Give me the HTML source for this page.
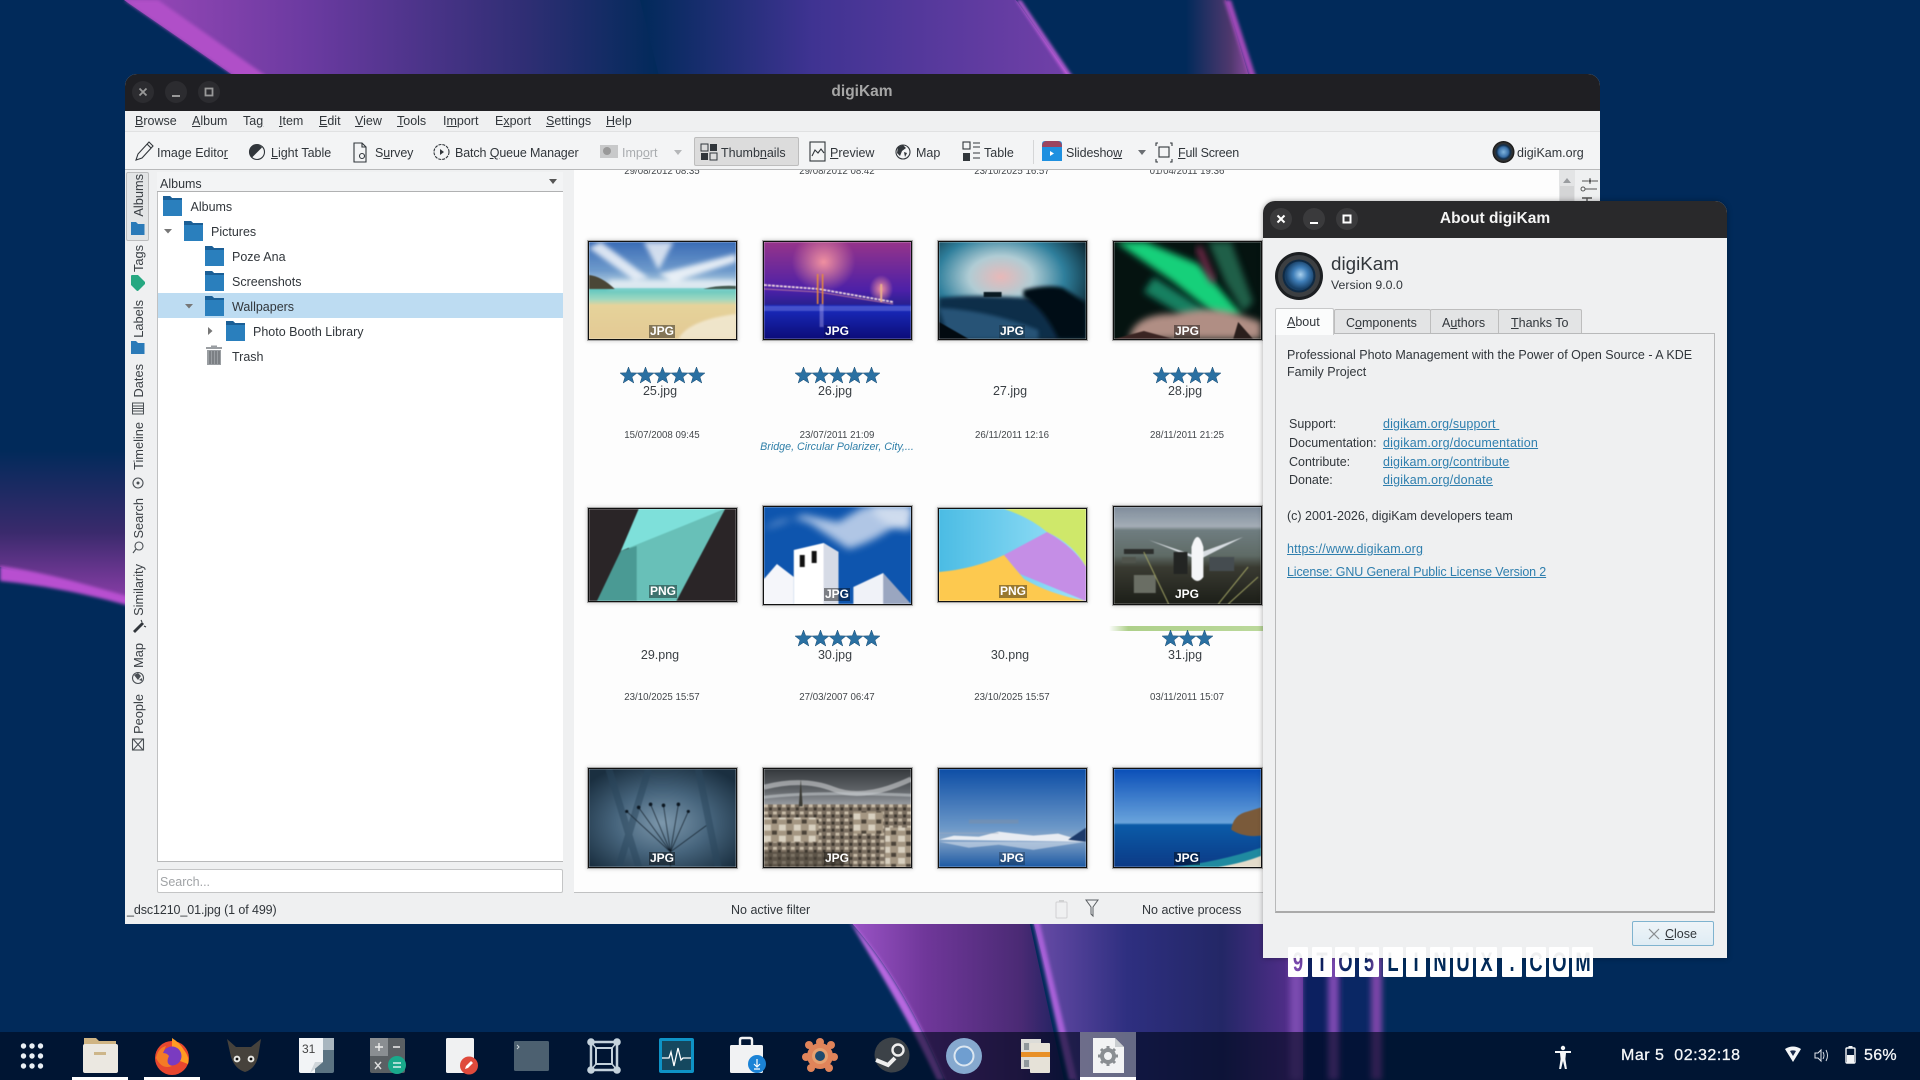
<!DOCTYPE html>
<html><head><meta charset="utf-8"><title>digiKam</title>
<style>
html,body{margin:0;padding:0;width:1920px;height:1080px;overflow:hidden;background:#012a5a}
body{position:relative;font-family:"Liberation Sans",sans-serif;font-size:12.5px;color:#31363b}
.a,.t,svg.a{position:absolute}
.t{white-space:nowrap;line-height:16px}
.v{writing-mode:vertical-rl;transform:rotate(180deg);left:131px;width:16px;line-height:16px;white-space:nowrap;position:absolute;font-size:12.8px;text-align:center;color:#3a3f44}
.th{position:absolute;box-shadow:0 0 0 1px #111,0 0 0 2px #aaa,0 0 4px 2px #ccc;overflow:hidden}
.th svg{position:absolute;left:0;top:0;width:100%;height:100%;filter:blur(.5px)}
.lb{position:absolute;font-weight:bold;font-size:12px;line-height:13px;color:#fff;background:rgba(0,0,0,.42);padding:0 1px}
.n{position:absolute;width:120px;text-align:center;line-height:16px;font-size:12.5px;color:#3a3f44}
.d{position:absolute;width:120px;text-align:center;line-height:14px;font-size:9.7px;color:#44484c}
a{color:#2f7fae;text-decoration:underline}
.tab{position:absolute;top:309px;height:24px;background:#e3e4e5;border:1px solid #bdbdbd;border-bottom:none;box-sizing:border-box;border-radius:2px 2px 0 0}
.wm{position:absolute;top:947px;height:30px;background:#fff;color:#000;mix-blend-mode:screen;text-align:center;overflow:hidden;border-radius:1px}
.wm span{display:block;font-weight:bold;font-size:27px;line-height:30px;transform:scaleX(.68)}
</style></head><body>

<!-- wallpaper -->
<svg class="a" style="left:0;top:0" width="1920" height="1080" viewBox="0 0 1920 1080">
<defs>
<filter id="sb" x="-20%" y="-5%" width="140%" height="110%"><feGaussianBlur stdDeviation="1.6"/></filter>
<filter id="sb2" x="-50%" y="-5%" width="200%" height="110%"><feGaussianBlur stdDeviation="3"/></filter>
<linearGradient id="w1" x1="0" x2="1" y1="0" y2="0"><stop offset="0" stop-color="#9a48b8"/><stop offset=".35" stop-color="#6a3aa0"/><stop offset=".75" stop-color="#2f2e74"/><stop offset="1" stop-color="#012a5a"/></linearGradient>
<linearGradient id="w2" x1="0" x2="1" y1="0" y2="0"><stop offset="0" stop-color="#012a5a"/><stop offset=".4" stop-color="#3f3392"/><stop offset="1" stop-color="#7240a8"/></linearGradient>
<linearGradient id="w3" x1="0" x2="0" y1="0" y2="1"><stop offset="0" stop-color="#012a5a"/><stop offset=".55" stop-color="#3a2a6c"/><stop offset="1" stop-color="#8a3ea8"/></linearGradient>
<linearGradient id="w4" x1="0" x2="1" y1="0" y2="0"><stop offset="0" stop-color="#9c55c8"/><stop offset=".35" stop-color="#70379a"/><stop offset=".8" stop-color="#4a2a74"/><stop offset="1" stop-color="#1c2260"/></linearGradient>
<linearGradient id="w5" x1="0" x2="1" y1="0" y2="0"><stop offset="0" stop-color="#6a4ca8"/><stop offset=".35" stop-color="#2e2f80"/><stop offset=".7" stop-color="#232766"/><stop offset="1" stop-color="#5a2f90"/></linearGradient>
<linearGradient id="w6" x1="0" x2="1" y1="0" y2="0"><stop offset="0" stop-color="#012a5a"/><stop offset=".7" stop-color="#50386e"/><stop offset="1" stop-color="#8a4aa0"/></linearGradient>
<linearGradient id="w7" x1="0" x2="1" y1="0" y2="0"><stop offset="0" stop-color="#5a2f90"/><stop offset=".5" stop-color="#7a4ab0"/><stop offset="1" stop-color="#1a2a66"/></linearGradient>
</defs>
<rect width="1920" height="1080" fill="#012a5a"/>
<!-- top -->
<polygon points="124,0 660,0 660,80 240,80" fill="url(#w1)"/>
<polygon points="124,0 158,0 272,80 240,80" fill="#b04fc8" filter="url(#sb)"/>
<polygon points="640,0 1016,0 1072,80 660,80" fill="url(#w2)"/>
<polygon points="1016,0 1021,0 1075,80 1069,80" fill="#c860e0" filter="url(#sb)" opacity=".9"/>
<polygon points="1186,0 1226,0 1250,80 1186,80" fill="url(#w6)"/>
<polygon points="1224,0 1231,0 1257,80 1250,80" fill="#a04ab8" filter="url(#sb)"/>
<!-- left -->
<polygon points="0,450 130,450 130,600 0,567" fill="url(#w3)"/>
<path d="M0,566 C50,573 90,586 130,597 L130,606 C90,595 50,586 0,581Z" fill="#b850d0" filter="url(#sb)"/>
<!-- bottom -->
<path d="M849,920 L1029,920 L1064,1080 L945,1080 C915,1010 885,960 849,920Z" fill="url(#w4)"/>
<path d="M849,920 C885,960 915,1010 945,1080 L937,1080 C907,1015 875,965 849,920Z" fill="#b868e0" filter="url(#sb)"/>
<path d="M1033,920 L1303,920 L1303,1080 L1075,1080Z" fill="url(#w5)"/>
<path d="M1033,920 L1039,920 L1077,1080 L1069,1080Z" fill="#a860d8" filter="url(#sb)"/>
<rect x="1303" y="950" width="40" height="130" fill="#0c2060"/>
<rect x="1342" y="950" width="30" height="130" fill="#0a2764" />
<rect x="1290" y="950" width="12" height="130" fill="#7a4cb0" filter="url(#sb2)"/>
<rect x="1328" y="950" width="11" height="130" fill="#7c4ab0" filter="url(#sb2)"/>
<rect x="1371" y="950" width="11" height="130" fill="#7c44a8" filter="url(#sb2)"/>
</svg>

<!-- main window -->
<div class="a" style="left:125px;top:74px;width:1475px;height:850px;background:#eff0f1;border-radius:12px 12px 0 0;overflow:hidden">
<div class="a" style="left:0;top:0;width:1475px;height:37px;background:#1f1f23"></div>
</div>
<div class="t" style="left:800px;width:124px;text-align:center;top:84px;font-weight:bold;font-size:15.5px;color:#a6a6a6">digiKam</div>
<svg class="a" style="left:125px;top:74px" width="100" height="37">
<circle cx="18" cy="18" r="11" fill="#2c2c30"/><circle cx="51" cy="18" r="11" fill="#2c2c30"/><circle cx="84" cy="18" r="11" fill="#2c2c30"/>
<path d="M14.5,14.5l7,7m0,-7l-7,7" stroke="#999" stroke-width="1.8"/><rect x="47" y="21" width="8" height="2" fill="#999"/><rect x="80.5" y="14.5" width="7" height="7" fill="none" stroke="#999" stroke-width="1.8"/>
</svg>

<!-- menu -->
<div class="t" style="left:135px;top:113px"><u>B</u>rowse</div>
<div class="t" style="left:192px;top:113px"><u>A</u>lbum</div>
<div class="t" style="left:243px;top:113px">Ta<u>g</u></div>
<div class="t" style="left:279px;top:113px"><u>I</u>tem</div>
<div class="t" style="left:319px;top:113px"><u>E</u>dit</div>
<div class="t" style="left:355px;top:113px"><u>V</u>iew</div>
<div class="t" style="left:397px;top:113px"><u>T</u>ools</div>
<div class="t" style="left:443px;top:113px">I<u>m</u>port</div>
<div class="t" style="left:495px;top:113px">E<u>x</u>port</div>
<div class="t" style="left:546px;top:113px"><u>S</u>ettings</div>
<div class="t" style="left:606px;top:113px"><u>H</u>elp</div>
<div class="a" style="left:125px;top:131px;width:1475px;height:1px;background:#e0e1e2"></div>

<!-- toolbar -->
<div class="a" style="left:125px;top:132px;width:1475px;height:37px;background:#f3f4f5"></div>
<div class="a" style="left:125px;top:169px;width:1475px;height:1px;background:#b8b9ba"></div>
<div class="a" style="left:694px;top:137px;width:105px;height:29px;background:#dcdcdc;border:1px solid #bdbdbd;box-sizing:border-box;border-radius:2px"></div>
<div class="t" style="left:157px;top:145px">Image Edito<u>r</u></div>
<div class="t" style="left:271px;top:145px"><u>L</u>ight Table</div>
<div class="t" style="left:375px;top:145px;letter-spacing:-.1px">S<u>u</u>rvey</div>
<div class="t" style="left:455px;top:145px;letter-spacing:-.12px">Batch <u>Q</u>ueue Manager</div>
<div class="t" style="left:622px;top:145px;color:#a9acaf">Imp<u>o</u>rt</div>
<div class="t" style="left:721px;top:145px">Thumb<u>n</u>ails</div>
<div class="t" style="left:830px;top:145px"><u>P</u>review</div>
<div class="t" style="left:916px;top:145px">Map</div>
<div class="t" style="left:984px;top:145px">Table</div>
<div class="t" style="left:1066px;top:145px;letter-spacing:-.1px">Slidesho<u>w</u></div>
<div class="t" style="left:1178px;top:145px;letter-spacing:-.2px"><u>F</u>ull Screen</div>
<div class="t" style="left:1517px;top:145px">digiKam.org</div>
<svg class="a" style="left:0;top:0" width="1600" height="440" viewBox="0 0 1600 440">
<defs>
<radialGradient id="lens"><stop offset="0" stop-color="#7fb4dc"/><stop offset=".45" stop-color="#3a70a8"/><stop offset=".62" stop-color="#12304e"/><stop offset=".8" stop-color="#333"/><stop offset="1" stop-color="#111"/></radialGradient>
</defs>
<g fill="none" stroke="#31363b" stroke-width="1.1">
<path d="M136,160 l2,-6 l11,-12 l4,4 l-11,12z M147,144 l4,4"/>
<circle cx="257" cy="152" r="7.5"/>
<path d="M354,143h8l4,4v15h-12z M362,143v4h4"/><circle cx="362" cy="156" r="2.5"/>
<circle cx="441.5" cy="152" r="7.5" stroke-dasharray="3 1"/>
<rect x="810" y="142" width="15" height="19"/><path d="M812,156l3,-6l3,3l3,-4l3,4"/>
<circle cx="903" cy="152" r="7"/>
<rect x="963" y="142" width="7" height="7"/>
<path d="M973,143h7m-7,4h7m-7,6h7m-7,5h7"/>
<path d="M1158,143h-2v3m14,-3h2v3m-16,13v3h2m14,-3v3h-2"/><rect x="1159" y="147" width="10" height="10"/>
</g>
<path d="M257,144.5a7.500,7.500 0 0 0 -5,13l10,-10a7.500,7.500 0 0 0 -5,-3z" fill="#31363b"/>
<path d="M440,149l4,3l-4,3z" fill="#31363b"/>
<path d="M898,147l5,-2l3,3l-4,3l-2,5l-3,-3zM904,152l3,1l-2,4z" fill="#31363b"/>
<rect x="963" y="153" width="7" height="8" fill="#31363b"/>
<!-- import -->
<rect x="600" y="145" width="18" height="13" fill="#c8c9ca"/><circle cx="607" cy="151" r="4" fill="#999"/>
<path d="M674,150h8l-4,5z" fill="#b5b7b9"/>
<!-- thumbs icon -->
<rect x="701" y="144" width="7" height="7" fill="none" stroke="#31363b"/><rect x="710" y="144" width="7" height="7" fill="#31363b"/><rect x="701" y="153" width="7" height="7" fill="#31363b"/><rect x="710" y="153" width="7" height="7" fill="none" stroke="#31363b"/>
<!-- slideshow -->
<path d="M1042,144q0,-3 3,-3h14q3,0 3,3v17h-20z" fill="#1e90e0"/><path d="M1042,147q0,-6 5,-6h10q5,0 5,6z" fill="#9b4560"/><path d="M1050,151l4,2.500l-4,2.500z" fill="#fff"/>
<path d="M1138,150h8l-4,5z" fill="#6a6e72"/>
<rect x="1033" y="140" width="1" height="24" fill="#d5d6d7"/>
<circle cx="1503.500" cy="152" r="11" fill="url(#lens)"/>
<!-- sidebar icons -->
<path d="M131,276q0,-1 1,-1h6l7,7v2l-6.500,6.500q-1,1 -2,0l-5.500,-5.500z" fill="#26a881"/>
<path d="M131,341h5l2,2h6.500v11h-13.500z" fill="#2a7ab8"/>
<g fill="none" stroke="#4a4f54" stroke-width="1"><rect x="132.500" y="403" width="11" height="11"/><path d="M133,406h10M133,408.500h10M133,411h10"/></g>
</svg>

<!-- sidebar -->
<div class="a" style="left:126px;top:172px;width:23px;height:69px;background:#e3e5e6;border:1px solid #bcbdbe;box-sizing:border-box;border-radius:2px"></div>
<svg class="a" style="left:0;top:0" width="160" height="260"><path d="M131,222h5l2,2h6.500v11h-13.500z" fill="#2a7ab8"/></svg>
<div class="v" style="top:174px">Albums</div>
<div class="v" style="top:245px">Tags</div>
<div class="v" style="top:300px">Labels</div>
<div class="v" style="top:364px">Dates</div>
<div class="v" style="top:422px">Timeline</div>
<div class="v" style="top:498px">Search</div>
<div class="v" style="top:564px">Similarity</div>
<div class="v" style="top:643px">Map</div>
<div class="v" style="top:694px">People</div>
<svg class="a" style="left:0;top:0" width="160" height="770" viewBox="0 0 160 770">
<g fill="none" stroke="#4a4f54" stroke-width="1.1">
<circle cx="138" cy="483" r="5"/><circle cx="139" cy="546" r="4"/><path d="M136,549l-3,4"/>
<circle cx="138" cy="678" r="5.500"/><rect x="132.500" y="739" width="11" height="11"/><path d="M133,739l10,11M143,739l-10,11"/>
</g>
<path d="M133,631l9,-9l2,2l-9,9z" fill="#31363b"/><path d="M141,620l1,2M144,626l2,1" stroke="#31363b"/>
<path d="M134,675l4,-2l3,3l-3,4zM139,680l3,-2l0,3z" fill="#4a4f54"/><circle cx="138" cy="483" r="1.500" fill="#4a4f54"/>
</svg>

<!-- left panel -->
<div class="a" style="left:157px;top:172px;width:406px;height:20px;background:#f3f4f5;border-bottom:1px solid #b0b1b2;box-sizing:border-box"></div>
<div class="t" style="left:160px;top:176px">Albums</div>
<svg class="a" style="left:548px;top:178px" width="10" height="8"><path d="M1,1h8l-4,5z" fill="#555"/></svg>
<div class="a" style="left:157px;top:192px;width:406px;height:670px;background:#fff;border-left:1px solid #c0c1c2;border-bottom:1px solid #b8b9ba;box-sizing:border-box"></div>
<div class="a" style="left:158px;top:293px;width:405px;height:25px;background:#bddcf2"></div>
<svg class="a" style="left:0;top:0" width="600" height="380" viewBox="0 0 600 380">
<defs><g id="f"><path d="M0,0h7l2,2h10v18h-19z" fill="#2a7fbd"/><path d="M0,0h7l2,2h10v2h-19z" fill="#1b5f96"/></g></defs>
<use href="#f" x="163" y="196"/><use href="#f" x="184" y="221"/><use href="#f" x="205" y="246"/><use href="#f" x="205" y="271"/><use href="#f" x="205" y="296"/><use href="#f" x="226" y="321"/>
<path d="M164,229h8l-4,4.500z M185,304h8l-4,4.500z" fill="#777"/><path d="M208,327v8l4.500,-4z" fill="#777"/>
<g fill="#9a9ea2"><rect x="206" y="347" width="16" height="2"/><rect x="211" y="345.500" width="6" height="2"/><rect x="207" y="350" width="14" height="15"/></g>
<g stroke="#5e6266" stroke-width="1"><path d="M210,351v13M213,351v13M216,351v13M219,351v13"/></g>
</svg>
<div class="t" style="left:190.500px;top:199px">Albums</div>
<div class="t" style="left:211px;top:224px">Pictures</div>
<div class="t" style="left:232px;top:249px">Poze Ana</div>
<div class="t" style="left:232px;top:274px">Screenshots</div>
<div class="t" style="left:232px;top:299px">Wallpapers</div>
<div class="t" style="left:253px;top:324px">Photo Booth Library</div>
<div class="t" style="left:232px;top:349px">Trash</div>
<div class="a" style="left:157px;top:869px;width:406px;height:24px;background:#fff;border:1px solid #c4c5c6;box-sizing:border-box;border-radius:2px"></div>
<div class="t" style="left:160px;top:874px;color:#a0a3a6">Search...</div>
<div class="t" style="left:127px;top:902px;letter-spacing:-.1px">_dsc1210_01.jpg (1 of 499)</div>

<!-- view background -->
<div class="a" style="left:574px;top:170px;width:985px;height:722px;background:#fdfdfd"></div>
<div class="a" style="left:574px;top:892px;width:1026px;height:1px;background:#c0c1c2"></div>
<div class="t" style="left:731px;top:902px">No active filter</div>
<div class="t" style="left:1142px;top:902px">No active process</div>
<svg class="a" style="left:1050px;top:897px" width="60" height="24"><rect x="6" y="5" width="11" height="16" rx="1" fill="none" stroke="#d0d1d2"/><rect x="9" y="3" width="5" height="2" fill="#d0d1d2"/><path d="M36,3h12l-5,7v9l-2,-2v-7z" fill="none" stroke="#5a5e62"/></svg>

<!-- scrollbar + rail -->
<div class="a" style="left:1559px;top:170px;width:16px;height:40px;background:#e3e4e5"></div>
<svg class="a" style="left:1559px;top:170px" width="41" height="32"><path d="M4,13h8l-4,-5z" fill="#9a9da0"/><rect x="1" y="16" width="14" height="16" fill="#d4d5d6"/>
<path d="M23,11h6M33,11h6M31,8v6M26,19h12" stroke="#555" fill="none"/><circle cx="31" cy="11" r="1.500" fill="#555"/><circle cx="24" cy="19" r="2" fill="#f3f4f5" stroke="#555"/><path d="M23,28h10M28,28v6" stroke="#555" stroke-width="1.400"/></svg>

<!-- thumbnails (clipped) -->
<div class="a" style="left:0;top:0;width:1920px;height:1080px;clip-path:inset(170px 657px 188px 574px)">
<div class="d" style="left:602px;top:165px">29/08/2012 08:35</div>
<div class="d" style="left:777px;top:165px">29/08/2012 08:42</div>
<div class="d" style="left:952px;top:165px">23/10/2025 16:57</div>
<div class="d" style="left:1127px;top:165px">01/04/2011 19:36</div>

<!-- 25 -->
<div class="th" style="left:589px;top:242px;width:147px;height:97px"><svg viewBox="0 0 148 97" preserveAspectRatio="none">
<defs><linearGradient id="a1" x2="0" y2="1"><stop offset="0" stop-color="#3a6cb6"/><stop offset=".6" stop-color="#6f9bcc"/><stop offset="1" stop-color="#cfe3e8"/></linearGradient><linearGradient id="a2" x2="0" y2="1"><stop offset="0" stop-color="#58c4c0"/><stop offset=".22" stop-color="#9fd8c0"/><stop offset=".34" stop-color="#e6d39a"/><stop offset="1" stop-color="#e3c995"/></linearGradient><filter id="b1" x="-30%" y="-30%" width="160%" height="160%"><feGaussianBlur stdDeviation="2.500"/></filter><filter id="b2"><feGaussianBlur stdDeviation="1"/></filter></defs>
<rect width="148" height="48" fill="url(#a1)"/><rect y="46" width="148" height="51" fill="url(#a2)"/>
<g filter="url(#b1)" fill="#f2f6fa"><path d="M0,6L45,38L60,36L12,0z" opacity=".85"/><path d="M70,32L148,12V20L85,40z" opacity=".9"/><path d="M55,0h30l-15,28z" opacity=".8"/><path d="M20,38H148V46H20z" opacity=".7"/></g>
<path d="M0,33 Q12,34 26,47H0z" fill="#4a4636"/><path d="M115,47q15,-4 33,-3v3z" fill="#445a50"/>
<path d="M90,97Q100,78 148,72V97z" fill="#f5f0e0" filter="url(#b2)" opacity=".7"/>
</svg></div><div class="lb" style="left:649px;top:325px">JPG</div>
<!-- 26 -->
<div class="th" style="left:764px;top:242px;width:147px;height:97px"><svg viewBox="0 0 148 97" preserveAspectRatio="none">
<defs><linearGradient id="c1" x2="0" y2="1"><stop offset="0" stop-color="#96348a"/><stop offset=".5" stop-color="#4c20a8"/><stop offset=".64" stop-color="#2a2090"/><stop offset=".66" stop-color="#1a2cc0"/><stop offset="1" stop-color="#0c0c78"/></linearGradient><radialGradient id="c2"><stop offset="0" stop-color="#f090a0"/><stop offset="1" stop-color="#f090a0" stop-opacity="0"/></radialGradient></defs>
<rect width="148" height="97" fill="url(#c1)"/><ellipse cx="60" cy="20" rx="32" ry="30" fill="url(#c2)"/><ellipse cx="118" cy="47" rx="12" ry="14" fill="url(#c2)"/>
<path d="M0,43L55,47L130,60" stroke="#f0d8e0" stroke-width="1.800" fill="none" stroke-dasharray="3 1"/><path d="M0,47L55,50L130,62" stroke="#b070a0" stroke-width="1" fill="none"/><path d="M54,32V62M59,32V62" stroke="#e88a3a" stroke-width="1.500"/><path d="M118,42V60" stroke="#e8b08a" stroke-width="2"/>
<path d="M0,64H148V69H0z" fill="#7a80e0" opacity=".45"/><path d="M58,62V85" stroke="#d0c8ff" stroke-width="4" opacity=".35"/>
</svg></div><div class="lb" style="left:824px;top:325px;background:rgba(0,0,0,.15)">JPG</div>
<!-- 27 -->
<div class="th" style="left:939px;top:242px;width:147px;height:97px"><svg viewBox="0 0 148 97" preserveAspectRatio="none">
<defs><radialGradient id="d1" cx=".42" cy=".36" r=".72"><stop offset="0" stop-color="#e8b8b8"/><stop offset=".3" stop-color="#b0ccd4"/><stop offset=".6" stop-color="#2f7f9c"/><stop offset="1" stop-color="#04141c"/></radialGradient><filter id="d2" x="-10%" y="-20%" width="120%" height="140%"><feGaussianBlur stdDeviation="1.800"/></filter></defs>
<rect width="148" height="97" fill="url(#d1)"/><path d="M0,56Q50,50 148,62V97H0z" fill="#0f2e48" filter="url(#d2)"/><path d="M85,48q25,-6 40,-2l23,15V97H120Q105,65 85,55z" fill="#050c14" filter="url(#d2)"/><rect x="45" y="50" width="18" height="5" fill="#0a1a22"/><path d="M0,66Q50,68 100,88V97H10z" fill="#30648a" opacity=".7" filter="url(#d2)"/><path d="M0,80L30,97H0z" fill="#020a10"/>
</svg></div><div class="lb" style="left:999px;top:325px;background:rgba(0,0,0,.2)">JPG</div>
<!-- 28 -->
<div class="th" style="left:1114px;top:242px;width:147px;height:97px"><svg viewBox="0 0 148 97" preserveAspectRatio="none">
<defs><filter id="e1" x="-30%" y="-30%" width="160%" height="160%"><feGaussianBlur stdDeviation="3.500"/></filter></defs>
<rect width="148" height="97" fill="#051310"/><path d="M2,0H32L85,22L128,72L108,78L60,40z" fill="#18d07a" filter="url(#e1)"/><path d="M40,35L108,78L80,80L30,50z" fill="#128060" filter="url(#e1)"/><path d="M95,0L112,40L130,70L140,60L118,0z" fill="#2a8060" filter="url(#e1)" opacity=".7"/><path d="M85,5L100,40" stroke="#a03060" stroke-width="6" filter="url(#e1)" opacity=".8"/>
<path d="M15,97Q20,72 60,72Q100,62 130,74L148,80V97z" fill="#b08e84" filter="url(#e1)"/><path d="M0,97h60l-30,-8z" fill="#3a2422"/><path d="M125,80l15,17h-20z" fill="#2a1e1c"/>
</svg></div><div class="lb" style="left:1174px;top:325px">JPG</div>

<!-- 29 -->
<div class="th" style="left:589px;top:509px;width:147px;height:92px"><svg viewBox="0 0 148 92" preserveAspectRatio="none">
<rect width="148" height="92" fill="#2a2527"/><polygon points="40,38 137,0 88,92 48,92" fill="#68c0b8"/><polygon points="32,42 48,37 48,92 8,92" fill="#4a9a94"/><polygon points="50,0 137,0 32,42" fill="#7ee0da"/>
</svg></div><div class="lb" style="left:649px;top:585px;background:rgba(0,0,0,.4)">PNG</div>
<!-- 30 -->
<div class="th" style="left:764px;top:507px;width:147px;height:97px"><svg viewBox="0 0 148 97" preserveAspectRatio="none">
<defs><filter id="g1" x="-30%" y="-30%" width="160%" height="160%"><feGaussianBlur stdDeviation="4"/></filter></defs>
<rect width="148" height="97" fill="#0e55ae"/><path d="M0,22Q30,2 55,22L85,42Q120,32 148,5V0H100L75,15L40,8z" fill="#e6ecf8" filter="url(#g1)" opacity=".75"/><path d="M105,0H148V22Q125,25 105,0z" fill="#cfdcee" filter="url(#g1)"/>
<polygon points="30,43 60,36 75,45 75,97 30,97" fill="#fff"/><polygon points="60,36 75,45 75,97 60,97" fill="#d6dbe6"/><polygon points="0,72 13,57 30,70 30,97 0,97" fill="#f5f6fa"/><polygon points="90,80 120,66 135,90 135,97 90,97" fill="#f0f2f8"/><polygon points="120,66 148,97 120,97" fill="#9aa6c0"/><rect x="36" y="48" width="5" height="12" fill="#111"/><rect x="48" y="44" width="5" height="12" fill="#111"/>
</svg></div><div class="lb" style="left:824px;top:588px">JPG</div>
<!-- 30 png -->
<div class="th" style="left:939px;top:509px;width:147px;height:92px"><svg viewBox="0 0 147 92" preserveAspectRatio="none">
<defs><linearGradient id="h1" x2="1" y2="0"><stop offset="0" stop-color="#4bbce4"/><stop offset="1" stop-color="#9fe4fa"/></linearGradient></defs>
<rect width="147" height="92" fill="url(#h1)"/><path d="M65,0H147V58Q135,35 108,23Q90,8 65,0z" fill="#cfe86a"/><path d="M108,23L65,46Q75,58 81,65L147,92V58Q135,38 108,23z" fill="#c58ee6"/><path d="M0,63Q35,60 65,46Q78,62 85,70Q110,85 147,92H0z" fill="#fdc94f"/>
</svg></div><div class="lb" style="left:999px;top:585px;background:rgba(0,0,0,.4)">PNG</div>
<!-- 31 -->
<div class="th" style="left:1114px;top:507px;width:147px;height:97px"><svg viewBox="0 0 148 97" preserveAspectRatio="none">
<defs><linearGradient id="i1" x2="0" y2="1"><stop offset="0" stop-color="#7f8d9c"/><stop offset=".2" stop-color="#a4adb6"/><stop offset=".24" stop-color="#6f7d80"/><stop offset=".5" stop-color="#5f6b66"/><stop offset=".62" stop-color="#3a3b32"/><stop offset="1" stop-color="#1c1e18"/></linearGradient></defs>
<rect width="148" height="97" fill="url(#i1)"/><path d="M35,33L80,48L130,30L85,53z" fill="#d8dde2"/><path d="M78,40Q84,20 90,40L90,70Q84,78 78,70z" fill="#f5f6f8"/>
<rect x="10" y="42" width="30" height="5" fill="#2c2e2c"/><rect x="20" y="68" width="22" height="18" fill="#6a6e64"/><rect x="8" y="50" width="14" height="6" fill="#50544c"/><path d="M30,45L55,97M105,97L135,60M115,97L145,70" stroke="#9a9c60" stroke-width="1"/><rect x="60" y="45" width="14" height="22" fill="#232523"/><rect x="96" y="50" width="25" height="14" fill="#454c50"/>
</svg></div><div class="lb" style="left:1174px;top:588px;background:none">JPG</div>

<!-- 32 -->
<div class="th" style="left:589px;top:769px;width:147px;height:98px"><svg viewBox="0 0 148 97" preserveAspectRatio="none">
<defs><radialGradient id="j1" cx=".5" cy=".55" r=".65"><stop offset="0" stop-color="#7d98ac"/><stop offset=".5" stop-color="#46647c"/><stop offset="1" stop-color="#1a2f40"/></radialGradient></defs>
<rect width="148" height="97" fill="url(#j1)"/><path d="M20,0L50,97M60,0L30,97M110,0L130,97" stroke="#2a465c" stroke-width="7" opacity=".5"/><g stroke="#0b1620" stroke-width=".6" fill="none"><path d="M82,82L38,42M82,82L50,38M82,82L62,35M82,82L75,36M82,82L90,35M82,82L100,42M82,82L118,56M82,82V97"/></g><g fill="#0b1620"><circle cx="38" cy="42" r="1.600"/><circle cx="50" cy="38" r="1.800"/><circle cx="62" cy="35" r="1.800"/><circle cx="75" cy="36" r="1.800"/><circle cx="90" cy="35" r="1.800"/><circle cx="100" cy="42" r="1.600"/></g>
</svg></div><div class="lb" style="left:649px;top:852px">JPG</div>
<!-- 33 -->
<div class="th" style="left:764px;top:769px;width:147px;height:98px"><svg viewBox="0 0 148 97" preserveAspectRatio="none">
<defs><pattern id="k1" width="9" height="7" patternUnits="userSpaceOnUse"><rect width="9" height="7" fill="#7a6e60"/><rect width="4" height="3" fill="#c8bca8"/><rect x="5" y="3" width="3" height="3" fill="#3a342c"/></pattern><pattern id="k3" width="15" height="11" patternUnits="userSpaceOnUse"><rect width="15" height="11" fill="#a49682"/><rect width="7" height="6" fill="#d8d0c0"/><rect x="8" y="6" width="5" height="4" fill="#4a4238"/></pattern><linearGradient id="k2" x2="0" y2="1"><stop offset="0" stop-color="#34383c"/><stop offset=".6" stop-color="#62666a"/><stop offset="1" stop-color="#9a9ea4"/></linearGradient></defs>
<rect width="148" height="36" fill="url(#k2)"/><path d="M0,18Q40,8 70,20T148,10" stroke="#d8dadc" stroke-width="5" fill="none" opacity=".55"/><path d="M0,28Q50,22 148,26" stroke="#c0c4c8" stroke-width="3" fill="none" opacity=".6"/><rect y="35" width="148" height="62" fill="url(#k1)"/><rect x="0" y="48" width="55" height="24" fill="url(#k3)"/><rect x="90" y="42" width="30" height="22" fill="url(#k3)"/><path d="M37,10l2,27h-4z" fill="#3a3a34"/><rect x="122" y="58" width="26" height="39" fill="url(#k3)"/><rect x="0" y="82" width="80" height="15" fill="#4a4238" opacity=".6"/>
</svg></div><div class="lb" style="left:824px;top:852px;background:rgba(0,0,0,.3)">JPG</div>
<!-- 34 -->
<div class="th" style="left:939px;top:769px;width:147px;height:98px"><svg viewBox="0 0 148 97" preserveAspectRatio="none">
<defs><linearGradient id="l1" x2="0" y2="1"><stop offset="0" stop-color="#0d4ea6"/><stop offset=".6" stop-color="#6c98c8"/><stop offset=".7" stop-color="#8aa8c8"/><stop offset=".72" stop-color="#7fa0c6"/><stop offset="1" stop-color="#1d5aa4"/></linearGradient></defs>
<rect width="148" height="97" fill="url(#l1)"/><path d="M0,70L15,66L40,67L60,62L95,66L120,64L148,72z" fill="#e8ecf2"/><path d="M0,72L30,78L60,75L95,80L148,72z" fill="#dfe6ee" opacity=".55"/><path d="M130,70L148,58V72z" fill="#1c3a6a"/><rect x="30" y="50" width="50" height="4" fill="#7e90a8" opacity=".5"/><rect x="0" y="63" width="60" height="1" fill="#a0aec0" opacity=".6"/>
</svg></div><div class="lb" style="left:999px;top:852px;background:rgba(0,0,0,.25)">JPG</div>
<!-- 35 -->
<div class="th" style="left:1114px;top:769px;width:147px;height:98px"><svg viewBox="0 0 148 97" preserveAspectRatio="none">
<defs><linearGradient id="m1" x2="0" y2="1"><stop offset="0" stop-color="#0a4fb8"/><stop offset=".55" stop-color="#6aa4dc"/><stop offset=".57" stop-color="#0b5ba8"/><stop offset="1" stop-color="#0c3a86"/></linearGradient></defs>
<rect width="148" height="97" fill="url(#m1)"/><path d="M118,60Q120,45 135,42L148,38V66Q130,68 118,60z" fill="#7a5a3a"/><path d="M60,97Q105,92 148,78V97z" fill="#1f8aa0"/><path d="M105,97Q130,93 148,86V97z" fill="#e4dccb"/>
</svg></div><div class="lb" style="left:1174px;top:852px">JPG</div>

<!-- green bar -->
<div class="a" style="left:1109px;top:626px;width:160px;height:5px;background:linear-gradient(90deg,rgba(176,214,130,0),#aed08a 12%,#bcd99c)"></div>

<!-- stars -->
<svg class="a" style="left:0;top:0" width="1300" height="700" viewBox="0 0 1300 700">
<defs><polygon id="s" points="8.500,0 10.700,5.800 17,6 12,10 13.800,16 8.500,12.600 3.200,16 5,10 0,6 6.300,5.800" fill="#2a70a2" stroke="#1d4e74" stroke-width=".5"/></defs>
<use href="#s" x="620" y="367"/><use href="#s" x="637" y="367"/><use href="#s" x="654" y="367"/><use href="#s" x="671" y="367"/><use href="#s" x="688" y="367"/>
<use href="#s" x="795" y="367"/><use href="#s" x="812" y="367"/><use href="#s" x="829" y="367"/><use href="#s" x="846" y="367"/><use href="#s" x="863" y="367"/>
<use href="#s" x="1153" y="367"/><use href="#s" x="1170" y="367"/><use href="#s" x="1187" y="367"/><use href="#s" x="1204" y="367"/>
<use href="#s" x="795" y="630"/><use href="#s" x="812" y="630"/><use href="#s" x="829" y="630"/><use href="#s" x="846" y="630"/><use href="#s" x="863" y="630"/>
<use href="#s" x="1162" y="630"/><use href="#s" x="1179" y="630"/><use href="#s" x="1196" y="630"/>
</svg>

<div class="n" style="left:600px;top:383px">25.jpg</div><div class="n" style="left:775px;top:383px">26.jpg</div><div class="n" style="left:950px;top:383px">27.jpg</div><div class="n" style="left:1125px;top:383px">28.jpg</div>
<div class="d" style="left:602px;top:429px">15/07/2008 09:45</div><div class="d" style="left:777px;top:429px">23/07/2011 21:09</div><div class="d" style="left:952px;top:429px">26/11/2011 12:16</div><div class="d" style="left:1127px;top:429px">28/11/2011 21:25</div>
<div class="t" style="left:737px;width:200px;text-align:center;top:439px;font-style:italic;font-size:10.7px;color:#2f7fa8">Bridge, Circular Polarizer, City,...</div>
<div class="n" style="left:600px;top:647px">29.png</div><div class="n" style="left:775px;top:647px">30.jpg</div><div class="n" style="left:950px;top:647px">30.png</div><div class="n" style="left:1125px;top:647px">31.jpg</div>
<div class="d" style="left:602px;top:691px">23/10/2025 15:57</div><div class="d" style="left:777px;top:691px">27/03/2007 06:47</div><div class="d" style="left:952px;top:691px">23/10/2025 15:57</div><div class="d" style="left:1127px;top:691px">03/11/2011 15:07</div>
</div>

<!-- About dialog -->
<div class="a" style="left:1263px;top:201px;width:464px;height:757px;background:#eff0f1;border-radius:12px 12px 0 0;overflow:hidden;box-shadow:0 0 6px rgba(0,0,0,.35)">
<div class="a" style="left:0;top:0;width:464px;height:37px;background:#29292b"></div>
</div>
<svg class="a" style="left:1263px;top:201px" width="110" height="37">
<circle cx="18" cy="18" r="11" fill="#3a3a3c"/><circle cx="51" cy="18" r="11" fill="#3a3a3c"/><circle cx="84" cy="18" r="11" fill="#3a3a3c"/>
<path d="M14.500,14.500l7,7m0,-7l-7,7" stroke="#fff" stroke-width="2"/><rect x="47" y="21" width="8" height="2" fill="#fff"/><rect x="80.500" y="14.500" width="7" height="7" fill="none" stroke="#fff" stroke-width="2"/>
</svg>
<div class="t" style="left:1395px;width:200px;text-align:center;top:211px;font-weight:bold;font-size:15.5px;color:#f4f4f4">About digiKam</div>
<svg class="a" style="left:1274px;top:251px" width="50" height="50"><defs><radialGradient id="ln" cx=".55" cy=".45"><stop offset="0" stop-color="#a8d0ee"/><stop offset=".5" stop-color="#3f7eb8"/><stop offset="1" stop-color="#173e64"/></radialGradient></defs><circle cx="25" cy="25" r="24" fill="#1c1f22"/><circle cx="25" cy="25" r="21" fill="#3c3f42"/><circle cx="25" cy="25" r="16.500" fill="#0f2a44"/><circle cx="25" cy="25" r="14.500" fill="url(#ln)"/></svg>
<div class="t" style="left:1331px;top:253px;font-size:18.8px;line-height:22px">digiKam</div>
<div class="t" style="left:1331px;top:277px;font-size:12.3px">Version 9.0.0</div>

<div class="a" style="left:1275px;top:333px;width:440px;height:580px;background:#eff0f1;border:1px solid #b8b9ba;border-bottom:2px solid #aaa;box-sizing:border-box"></div>
<div class="tab" style="left:1334px;width:97px"></div>
<div class="tab" style="left:1430px;width:69px"></div>
<div class="tab" style="left:1498px;width:84px"></div>
<div class="a" style="left:1275px;top:308px;width:59px;height:27px;background:#fbfcfc;border:1px solid #c8c9ca;border-bottom:none;box-sizing:border-box;border-radius:2px 2px 0 0"></div>
<div class="t" style="left:1287px;top:314px"><u>A</u>bout</div>
<div class="t" style="left:1346px;top:315px">C<u>o</u>mponents</div>
<div class="t" style="left:1442px;top:315px">A<u>u</u>thors</div>
<div class="t" style="left:1511px;top:315px"><u>T</u>hanks To</div>

<div class="t" style="left:1287px;top:347px">Professional Photo Management with the Power of Open Source - A KDE</div>
<div class="t" style="left:1287px;top:364px">Family Project</div>
<div class="t" style="left:1289px;top:416px">Support:</div><div class="t" style="left:1383px;top:416px;letter-spacing:.15px"><a>digikam.org/support&nbsp;</a></div>
<div class="t" style="left:1289px;top:435px">Documentation:</div><div class="t" style="left:1383px;top:435px;letter-spacing:.2px"><a>digikam.org/documentation</a></div>
<div class="t" style="left:1289px;top:454px">Contribute:</div><div class="t" style="left:1383px;top:454px;letter-spacing:.16px"><a>digikam.org/contribute</a></div>
<div class="t" style="left:1289px;top:472px">Donate:</div><div class="t" style="left:1383px;top:472px;letter-spacing:.2px"><a>digikam.org/donate</a></div>
<div class="t" style="left:1287px;top:508px">(c) 2001-2026, digiKam developers team</div>
<div class="t" style="left:1287px;top:541px;letter-spacing:.18px"><a>https://www.digikam.org</a></div>
<div class="t" style="left:1287px;top:564px;letter-spacing:-.14px"><a>License: GNU General Public License Version 2</a></div>

<div class="a" style="left:1632px;top:921px;width:82px;height:25px;background:linear-gradient(#eef4f8,#dfecf4);border:1px solid #7fb3cf;box-sizing:border-box;border-radius:2px"></div>
<svg class="a" style="left:1647px;top:927px" width="14" height="14"><path d="M2,2l10,10m0,-10l-10,10" stroke="#8a8e92" stroke-width="1.200"/></svg>
<div class="t" style="left:1665px;top:926px"><u>C</u>lose</div>

<!-- taskbar -->
<div class="a" style="left:0;top:1032px;width:1920px;height:48px;background:rgba(0,8,28,.62)"></div>
<div class="a" style="left:1080px;top:1032px;width:56px;height:45px;background:rgba(255,255,255,.36)"></div>
<div class="a" style="left:72px;top:1077px;width:56px;height:3px;background:#fff"></div>
<div class="a" style="left:144px;top:1077px;width:56px;height:3px;background:#fff"></div>
<div class="a" style="left:1080px;top:1077px;width:56px;height:3px;background:#fff"></div>

<svg class="a" style="left:0;top:1032px" width="1920" height="48" viewBox="0 1032 1920 48">
<g fill="#e8eef4"><circle cx="23.500" cy="1046" r="2.700"/><circle cx="32" cy="1046" r="2.700"/><circle cx="40.500" cy="1046" r="2.700"/><circle cx="23.500" cy="1056" r="2.700"/><circle cx="32" cy="1056" r="2.700"/><circle cx="40.500" cy="1056" r="2.700"/><circle cx="23.500" cy="1066" r="2.700"/><circle cx="32" cy="1066" r="2.700"/><circle cx="40.500" cy="1066" r="2.700"/></g>
<!-- files -->
<path d="M84,1038h12l3,3h17v6H84z" fill="#cfb483"/><rect x="83" y="1044" width="35" height="29" rx="2" fill="#ebe8e1"/><rect x="94" y="1052" width="12" height="3" fill="#cdb68a"/>
<!-- firefox -->
<circle cx="172" cy="1058" r="17" fill="#e8472f"/><path d="M172,1038q8,5 12,12q6,8 4,14l-16,-6z" fill="#ff9b22"/><circle cx="172" cy="1056" r="9.500" fill="#7a3bc0"/><path d="M156,1058q2,-10 10,-12l-3,7q4,0 6,3q-4,8 3,10q-10,4 -16,-8z" fill="#f47b26"/>
<!-- gimp -->
<path d="M227,1039l9,8h15l10,-8l-3,18q-3,12 -13,15q-10,-3 -14,-15z" fill="#46423c"/><circle cx="237" cy="1059" r="3.400" fill="#e8e8e4"/><circle cx="251" cy="1059" r="3.400" fill="#e8e8e4"/><circle cx="237" cy="1059" r="1.400" fill="#111"/><circle cx="251" cy="1059" r="1.400" fill="#111"/>
<!-- calendar -->
<rect x="299" y="1038" width="35" height="35" rx="2" fill="#5b7382"/><rect x="299" y="1038" width="24" height="24" fill="#f2f4f6"/><rect x="323" y="1038" width="11" height="12" fill="#a9b6bf"/><path d="M299,1062h16v11h-14q-2,0 -2,-2z" fill="#f2f4f6"/><path d="M310,1073l5,-11h8z" fill="#d0d6da"/>
<text x="302" y="1053" font-family="Liberation Sans" font-size="12" fill="#444">31</text>
<!-- calc -->
<rect x="370" y="1038" width="35" height="35" rx="2" fill="#5a5f63"/><rect x="370" y="1038" width="18" height="18" fill="#8a8e92"/><path d="M375,1047h8m-4,-4v8M393,1047h7" stroke="#eee" stroke-width="1.400"/><path d="M375,1062l6,7m0,-7l-6,7" stroke="#ddd" stroke-width="1.400"/><circle cx="397" cy="1065" r="9" fill="#19a98b"/><path d="M393,1063h8M393,1067h8" stroke="#fff" stroke-width="1.300"/>
<!-- notes -->
<rect x="446" y="1038" width="28" height="35" rx="1.500" fill="#f0f1f2"/><circle cx="469" cy="1065.500" r="9" fill="#df4a3c"/><path d="M465,1069l1,-3l5,-5l2,2l-5,5z" fill="#fff"/>
<!-- terminal -->
<rect x="514" y="1041" width="35" height="30" rx="1.500" fill="#4c6070"/><path d="M517,1045l2,2l-2,2" stroke="#cfd8de" fill="none"/>
<!-- krita-like -->
<g fill="none" stroke="#c4d2dc" stroke-width="2.500"><path d="M589,1042L619,1042M589,1070L619,1070M591,1042V1070M617,1042V1070"/><rect x="596" y="1048" width="16" height="16" stroke-width="2"/></g><g fill="#c4d2dc"><circle cx="591" cy="1042" r="3.800"/><circle cx="617" cy="1042" r="3.800"/><circle cx="591" cy="1070" r="3.800"/><circle cx="617" cy="1070" r="3.800"/></g><path d="M591,1042l5,6M617,1042l-5,6M591,1070l5,-6M617,1070l-5,-6" stroke="#c4d2dc" stroke-width="1.500"/>
<!-- monitor -->
<rect x="659" y="1038" width="35" height="35" rx="2" fill="#0e93c6"/><rect x="662" y="1041" width="29" height="29" fill="#15485f"/><path d="M662,1058h7l2,-6l3,14l4,-18l3,12l2,-2h8" stroke="#fff" fill="none" stroke-width="1.300"/>
<!-- store -->
<rect x="730" y="1045" width="33" height="28" rx="1.500" fill="#f1f2f3"/><path d="M740,1046v-6q0,-2 2,-2h8q2,0 2,2v6" stroke="#f1f2f3" stroke-width="2.400" fill="none"/><circle cx="757" cy="1064" r="9" fill="#1b83d6"/><path d="M757,1059v7m-3,-2l3,3l3,-3m-6,5h6" stroke="#fff" stroke-width="1.200" fill="none"/>
<!-- xnview -->
<g fill="#e0845a"><circle cx="820" cy="1056" r="13"/><circle cx="820" cy="1042" r="4"/><circle cx="809" cy="1045" r="4"/><circle cx="831" cy="1045" r="4"/><circle cx="806" cy="1057" r="4"/><circle cx="834" cy="1057" r="4"/><circle cx="811" cy="1068" r="4"/><circle cx="829" cy="1068" r="4"/></g><circle cx="820" cy="1056" r="8" fill="#e6a070"/><circle cx="820" cy="1056" r="5" fill="#1e4a6e"/>
<!-- steam -->
<circle cx="892" cy="1055" r="17.500" fill="#3c4248"/><circle cx="898" cy="1050" r="5.500" fill="none" stroke="#eee" stroke-width="2.400"/><path d="M876,1060l12,5l7,-7" stroke="#eee" stroke-width="4" fill="none"/>
<!-- chrome-ish -->
<circle cx="964" cy="1056" r="18" fill="#86a9cf"/><circle cx="964" cy="1056" r="9.500" fill="#6f9ed0" stroke="#dbe6f0" stroke-width="2"/>
<!-- archive -->
<rect x="1021" y="1039" width="20" height="30" fill="#dcdcd8"/><rect x="1030" y="1043" width="20" height="30" rx="1" fill="#e6e2d8"/><rect x="1021" y="1052" width="29" height="5" fill="#e89028"/><rect x="1024" y="1043" width="5" height="7" fill="#90989c"/><rect x="1024" y="1060" width="5" height="7" fill="#90989c"/>
<!-- settings -->
<path d="M1093,1038h22l9,9v26h-31z" fill="#f2f3f4"/><path d="M1115,1038v9h9z" fill="#c9cdd0"/>
<circle cx="1108" cy="1056" r="6" fill="none" stroke="#8a8e92" stroke-width="4"/><g stroke="#8a8e92" stroke-width="3"><path d="M1108,1046v3M1108,1063v3M1098,1056h3M1115,1056h3M1101,1049l2,2M1113,1061l2,2M1115,1049l-2,2M1103,1061l-2,2"/></g>
<!-- tray -->
<g fill="#f4f6f8"><circle cx="1563" cy="1048" r="2.200"/><path d="M1555,1051h16v2h-5l-.6,6l1.500,10h-2l-1.900,-8l-1.900,8h-2l1.500,-10l-.6,-6h-5z"/></g>
<path d="M1785,1049q8,-5 16,0l-8,13z" fill="#f4f6f8"/><path d="M1790,1051q3,-1.200 6,0l-3,5z" fill="#1a2a4a"/>
<path d="M1815,1053h3l3,-3v11l-3,-3h-3z" fill="none" stroke="#e4e8ee" stroke-width="1"/><path d="M1823,1052q2,3.500 0,7M1826,1050q3,5.500 0,11" fill="none" stroke="#e4e8ee" stroke-width=".9"/>
<rect x="1846" y="1048" width="9" height="15" rx="1" fill="none" stroke="#f4f6f8" stroke-width="1.400"/><rect x="1848.500" y="1046" width="4" height="2" fill="#f4f6f8"/><rect x="1847" y="1055" width="7" height="7.500" fill="#f4f6f8"/>
</svg>
<div class="t" style="left:1621px;top:1047px;font-size:16px;line-height:18px;letter-spacing:.5px;color:#f4f6f8;-webkit-text-stroke:.3px #f4f6f8">Mar 5&nbsp; 02:32:18</div>
<div class="t" style="left:1864px;top:1047px;font-size:16px;line-height:18px;letter-spacing:.3px;color:#f4f6f8;-webkit-text-stroke:.3px #f4f6f8">56%</div>

<!-- watermark -->
<div class="wm" style="left:1288px;width:20px"><span>9</span></div>
<div class="wm" style="left:1312px;width:20px"><span>T</span></div>
<div class="wm" style="left:1335px;width:20px"><span>O</span></div>
<div class="wm" style="left:1359px;width:20px"><span>5</span></div>
<div class="wm" style="left:1383px;width:20px"><span>L</span></div>
<div class="wm" style="left:1406px;width:20px"><span>I</span></div>
<div class="wm" style="left:1430px;width:20px"><span>N</span></div>
<div class="wm" style="left:1453px;width:20px"><span>U</span></div>
<div class="wm" style="left:1476px;width:21px"><span>X</span></div>
<div class="wm" style="left:1502px;width:20px"><span>.</span></div>
<div class="wm" style="left:1526px;width:20px"><span>C</span></div>
<div class="wm" style="left:1549px;width:20px"><span>O</span></div>
<div class="wm" style="left:1572px;width:21px"><span>M</span></div>
</body></html>
